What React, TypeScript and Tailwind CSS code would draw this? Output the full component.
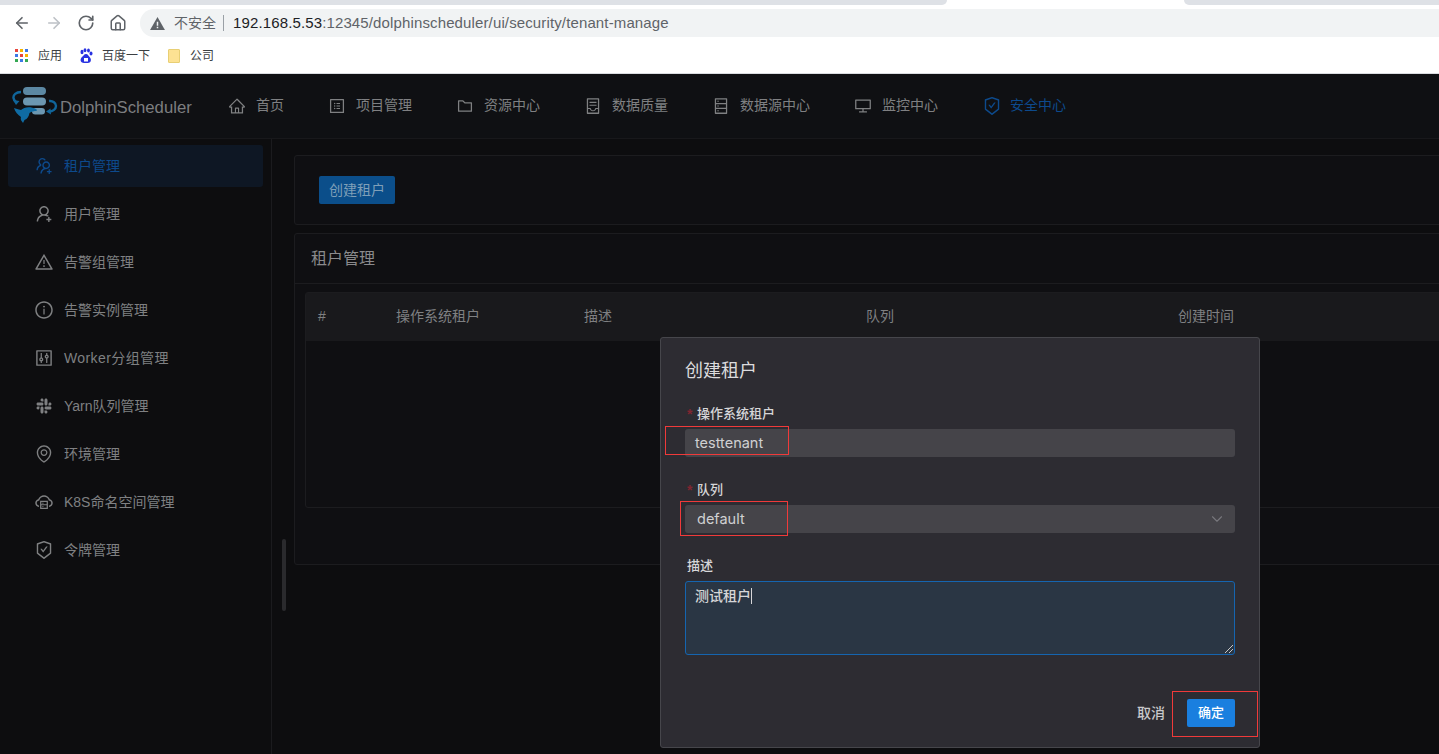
import React from "react";
import { ArrowLeft, ArrowRight, RotateCw, House, ChevronDown } from "lucide-react";
import {
  AiOutlineHome,
  AiOutlineProfile,
  AiOutlineFolder,
  AiOutlineContainer,
  AiOutlineDatabase,
  AiOutlineDesktop,
  AiOutlineSafetyCertificate,
  AiOutlineUsergroupAdd,
  AiOutlineUserAdd,
  AiOutlineWarning,
  AiOutlineInfoCircle,
  AiOutlineControl,
  AiOutlineSlack,
  AiOutlineEnvironment,
  AiOutlineCloudServer,
} from "react-icons/ai";

const cjk = "font-['Liberation_Sans','Noto_Sans_CJK_SC',sans-serif]";

function Logo() {
  return (
    <svg viewBox="0 0 46 38" className="h-[38px] w-[46px]">
      <rect x="11" y="0" width="23" height="8" rx="4" fill="#5c88a3" />
      <rect x="11" y="10.500" width="23" height="8" rx="4" fill="#6c97b1" />
      <rect x="20" y="21" width="13" height="6.500" rx="3.200" fill="#6c97b1" />
      <path d="M9 5C4 5 1 8 1.500 11c.3 2 1 3 2.500 4" fill="none" stroke="#10659a" strokeWidth="2.400" />
      <path d="M1 13l6.500 1-3.500 4z" fill="#10659a" />
      <path d="M37 14c4-.5 7 2 7 5 0 3-3 5.500-7 5.500" fill="none" stroke="#10659a" strokeWidth="2.400" />
      <path d="M39 27.500l-5-3 4.500-3z" fill="#10659a" />
      <path d="M2 21c2 1 4 1 7 2 3-3 9-4 15-1 1 .5 1 1.500.5 2-2 0-5 .5-7 2-.5 3-2 6-5 7l-1.500 3c-1-2-3-3-2-6-3-2-6-5-7-9z" fill="#0f6ba3" />
    </svg>
  );
}

function AppsIcon() {
  const colors = ["#e8453c", "#f4b400", "#3b78e7", "#3b78e7", "#e8453c", "#f4b400", "#34a853", "#3b78e7", "#34a853"];
  return (
    <div className="grid h-[13px] w-[13px] grid-cols-3 gap-[2px]">
      {colors.map((c, i) => (
        <span key={i} style={{ backgroundColor: c }} />
      ))}
    </div>
  );
}

function PawIcon() {
  return (
    <svg viewBox="0 0 14 16" className="h-[16px] w-[14px]" fill="#2932e1">
      <ellipse cx="3" cy="4" rx="1.500" ry="2.200" />
      <ellipse cx="6" cy="2.300" rx="1.400" ry="2" />
      <ellipse cx="9.500" cy="2.500" rx="1.400" ry="2" />
      <ellipse cx="12" cy="5.500" rx="1.500" ry="2" />
      <path d="M7 6c2 0 2.500 2 4 3.500 2 2.500.5 5.500-2 5.500H5c-3 0-4.500-3-2.500-5.500C4.500 8 5 6 7 6z" />
      <rect x="5" y="10" width="4" height="3.500" fill="#fff" />
    </svg>
  );
}

function BrowserBar() {
  return (
    <div className="shrink-0 bg-white">
      <div className="flex h-[9px] items-start">
        <div className="h-[5px] w-[947px] rounded-br-lg bg-[#dee1e6]" />
        <div className="flex-1" />
        <div className="h-[5px] w-[255px] rounded-bl-lg bg-[#dee1e6]" />
      </div>
      <div className="flex h-[28px] items-center">
        <div className="flex w-[140px] items-center gap-[14px] pl-[13px] text-[#5f6368]">
          <ArrowLeft size={18} strokeWidth={2.2} />
          <ArrowRight size={18} strokeWidth={2.2} className="text-[#bdc1c6]" />
          <RotateCw size={18} strokeWidth={2.2} />
          <House size={18} strokeWidth={2} />
        </div>
        <div className={`flex h-[28px] flex-1 items-center rounded-l-[14px] bg-[#f1f3f4] pl-[10px] ${cjk}`}>
          <svg viewBox="0 0 16 14" className="h-[13px] w-[15px] fill-[#5f6368]">
            <path d="M8 0l8 14H0z" />
            <path d="M7.200 5h1.600v4.500H7.200zM7.200 10.500h1.600V12H7.200z" fill="#f1f3f4" />
          </svg>
          <span className="ml-[9px] text-[14px] text-[#5f6368]">不安全</span>
          <span className="ml-[7px] mr-[9px] h-[16px] w-px bg-[#9aa0a6]" />
          <span className="pt-[1px] text-[15px] tracking-[0.13px] text-[#5f6368]">
            <span className="text-[#202124]">192.168.5.53</span>:12345/dolphinscheduler/ui/security/tenant-manage
          </span>
        </div>
      </div>
      <div className={`flex h-[37px] items-center border-b border-[#dadce0] pl-[15px] pt-[1px] text-[12px] text-[#3c4043] ${cjk}`}>
        <AppsIcon />
        <span className="ml-[10px]">应用</span>
        <span className="ml-[17px]"><PawIcon /></span>
        <span className="ml-[9px]">百度一下</span>
        <span className="ml-[18px] h-[14px] w-[12px] rounded-[1px] border border-[#e8cf74] bg-[#fde293]" />
        <span className="ml-[10px]">公司</span>
      </div>
    </div>
  );
}

const navItems = [
  { label: "首页", Icon: AiOutlineHome },
  { label: "项目管理", Icon: AiOutlineProfile },
  { label: "资源中心", Icon: AiOutlineFolder },
  { label: "数据质量", Icon: AiOutlineContainer },
  { label: "数据源中心", Icon: AiOutlineDatabase },
  { label: "监控中心", Icon: AiOutlineDesktop },
  { label: "安全中心", Icon: AiOutlineSafetyCertificate, active: true },
];

function TopNav() {
  return (
    <header className={`flex h-[65px] shrink-0 items-center border-b border-[#18181b] bg-[#0f1013] pl-[12px] ${cjk}`}>
      <Logo />
      <span className="ml-[2px] w-[168px] pt-[3px] text-[16.700px] text-[#7d7e80] font-['Liberation_Sans',sans-serif]">DolphinScheduler</span>
      <nav className="-mt-[1px] flex items-center gap-[44px] text-[14px]">
        {navItems.map(({ label, Icon, active }) => (
          <div key={label} className={`flex items-center ${active ? "gap-[8px] text-[#0d4a8c]" : "gap-[10px] text-[#7f8082]"}`}>
            <Icon size={active ? 20 : 18} className="shrink-0" />
            <span>{label}</span>
          </div>
        ))}
      </nav>
    </header>
  );
}

const sideItems = [
  { label: "租户管理", Icon: AiOutlineUsergroupAdd, active: true },
  { label: "用户管理", Icon: AiOutlineUserAdd },
  { label: "告警组管理", Icon: AiOutlineWarning },
  { label: "告警实例管理", Icon: AiOutlineInfoCircle },
  { label: "Worker分组管理", Icon: AiOutlineControl, wide: true },
  { label: "Yarn队列管理", Icon: AiOutlineSlack },
  { label: "环境管理", Icon: AiOutlineEnvironment },
  { label: "K8S命名空间管理", Icon: AiOutlineCloudServer },
  { label: "令牌管理", Icon: AiOutlineSafetyCertificate },
];

function Sidebar() {
  return (
    <aside className={`flex w-[272px] shrink-0 flex-col gap-[6px] border-r border-[#1b1b1e] px-[8px] pt-[6px] text-[14px] ${cjk}`}>
      {sideItems.map(({ label, Icon, active, wide }) => (
        <div
          key={label}
          className={`flex h-[42px] items-center gap-[10px] rounded-[3px] pl-[26px] ${active ? "bg-[#0e1724] text-[#0d4a8c]" : "text-[#7f8082]"}`}
        >
          <Icon size={20} className="shrink-0" />
          <span className={wide ? "tracking-[0.4px]" : ""}>{label}</span>
        </div>
      ))}
    </aside>
  );
}

function Main() {
  return (
    <main className={`relative flex-1 overflow-hidden pl-[22px] pt-[16px] ${cjk}`}>
      <div className="absolute left-[10px] top-[400px] h-[72px] w-[4px] rounded-full bg-[#2a2a2d]" />
      <section className="flex h-[70px] w-[1300px] items-center rounded-[3px] border border-[#1c1c1f] bg-[#0f0f12] pl-[24px]">
        <button className="h-[28px] w-[76px] rounded-[2px] bg-[#0b4e8a] text-[14px] text-[#7f9fb8]">创建租户</button>
      </section>
      <section className="mt-[8px] h-[332px] w-[1300px] rounded-[3px] border border-[#1c1c1f] bg-[#0f0f12]">
        <div className="flex h-[50px] items-center border-b border-[#1c1c1f] pl-[16px] text-[16px] text-[#8a8a8c]">租户管理</div>
        <div className="mx-[10px] mt-[8px] h-[216px] rounded-[3px] border border-[#1c1c1f]">
          <div className="flex h-[48px] items-center bg-[#19191c] pb-[2px] text-[14px] text-[#7f8082]">
            <span className="w-[90px] pl-[12px]">#</span>
            <span className="w-[188px]">操作系统租户</span>
            <span className="w-[282px]">描述</span>
            <span className="w-[312px]">队列</span>
            <span>创建时间</span>
          </div>
        </div>
      </section>
    </main>
  );
}

function Label({ text, required }: { text: string; required?: boolean }) {
  return (
    <div className="flex h-[25px] items-start pl-[2px] text-[13px] font-medium text-[#d6d6d8]">
      {required && <span className="w-[10px] text-[14px] font-bold text-[#7f2530]">*</span>}
      {text}
    </div>
  );
}

function Modal() {
  return (
    <div className={`absolute left-[660px] top-[337px] h-[411px] w-[600px] rounded-[3px] border border-[#46464b] bg-[#2d2c32] px-[24px] ${cjk}`}>
      <h2 className="flex h-[66px] items-center text-[18px] text-[#dcdcde]">创建租户</h2>
      <Label text="操作系统租户" required />
      <div className="flex h-[28px] items-center rounded-[3px] bg-[#454449] pl-[10px] text-[14.500px] text-[#d0d0d2] font-['Inter',sans-serif]">testtenant</div>
      <div className="mt-[23px]"><Label text="队列" required /></div>
      <div className="flex h-[28px] items-center justify-between rounded-[3px] bg-[#454449] pl-[12px] pr-[9px] text-[14.500px] text-[#d0d0d2] font-['Inter',sans-serif]">
        default
        <ChevronDown size={18} strokeWidth={1.5} className="text-[#77777c]" />
      </div>
      <div className="mt-[23px]"><Label text="描述" /></div>
      <div className="relative h-[74px] rounded-[3px] border border-[#1565b0] bg-[#2a3644] pl-[9px] pt-[4px] text-[14px] font-medium text-[#d6d6d8]">
        <span className="border-r border-[#d6d6d8]">测试租户</span>
        <svg viewBox="0 0 8 8" className="absolute bottom-px right-px h-[8px] w-[8px] stroke-[#c8c8c8]">
          <path d="M0 8l8-8M4 8l4-4" />
        </svg>
      </div>
      <div className="mt-[44px] flex items-center justify-end gap-[22px] text-[14px] font-medium">
        <span className="text-[#c9c9cb]">取消</span>
        <button className="h-[28px] w-[48px] rounded-[2px] bg-[#1a7fdf] text-[13px] text-white">确定</button>
      </div>
      {/* red annotation boxes from the screenshot */}
      <div className="absolute left-[4px] top-[88px] h-[29px] w-[124px] border border-[#f03a3a]" />
      <div className="absolute left-[19px] top-[163px] h-[35px] w-[108px] border border-[#f03a3a]" />
      <div className="absolute left-[511px] top-[353px] h-[46px] w-[86px] border border-[#f03a3a]" />
    </div>
  );
}

export default function App() {
  return (
    <div className="relative flex h-[754px] w-[1439px] flex-col overflow-hidden bg-[#0d0d0f]">
      <BrowserBar />
      <TopNav />
      <div className="flex min-h-0 flex-1">
        <Sidebar />
        <Main />
      </div>
      <Modal />
    </div>
  );
}
